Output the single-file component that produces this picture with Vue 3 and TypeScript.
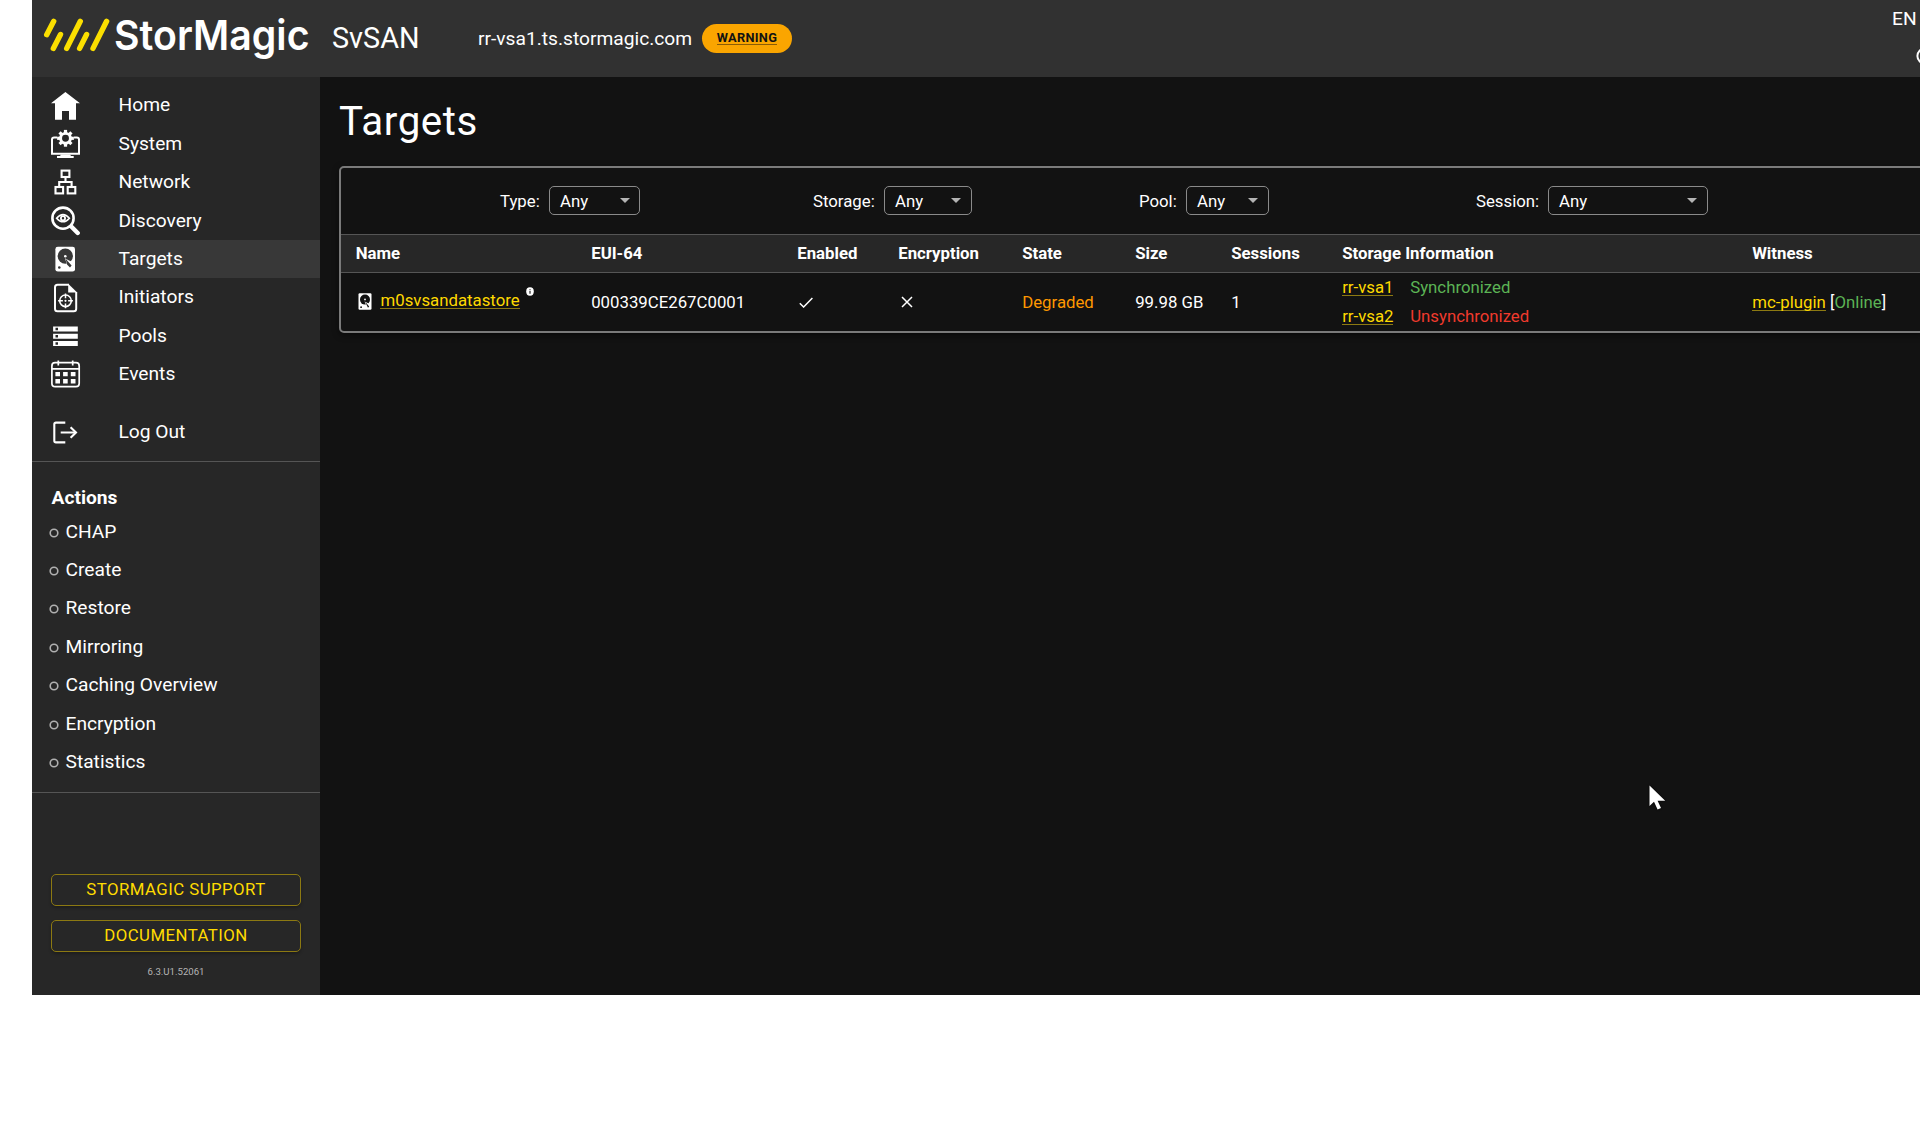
<script setup lang="ts">
interface NavItem { label: string; icon: string }
interface Filter { label: string; cls: string }

const nav: NavItem[] = [
  { label: 'Home', icon: 'home' },
  { label: 'System', icon: 'system' },
  { label: 'Network', icon: 'network' },
  { label: 'Discovery', icon: 'discovery' },
  { label: 'Targets', icon: 'targets' },
  { label: 'Initiators', icon: 'initiators' },
  { label: 'Pools', icon: 'pools' },
  { label: 'Events', icon: 'events' },
  { label: 'Log Out', icon: 'logout' },
]
const active = 'Targets'
const actions: string[] = ['CHAP', 'Create', 'Restore', 'Mirroring', 'Caching Overview', 'Encryption', 'Statistics']
const filters: Filter[] = [
  { label: 'Type:', cls: 'type' },
  { label: 'Storage:', cls: 'storage' },
  { label: 'Pool:', cls: 'pool' },
  { label: 'Session:', cls: 'session' },
]
const columns: string[] = ['Name', 'EUI-64', 'Enabled', 'Encryption', 'State', 'Size', 'Sessions', 'Storage Information', 'Witness']
const teeth: number[] = [0, 45, 90, 135, 180, 225, 270, 315]
</script>

<template>
  <div class="app">
    <header class="topbar">
      <svg class="logo" width="284" height="77" viewBox="0 0 284 77">
        <g stroke="#fbdf00" stroke-width="5.4" stroke-linecap="round">
          <path d="M14.7 34.7 21.7 21.3M21.3 48.4 28.5 34.5M34.7 48.4 48.3 21.3M47.6 48.4 54.6 34.5M61 48.4 74.6 21.3" />
        </g>
        <text x="82" y="50" textLength="195.5" lengthAdjust="spacingAndGlyphs" class="wordmark">StorMagic</text>
      </svg>
      <span class="product">SvSAN</span>
      <span class="host">rr-vsa1.ts.stormagic.com</span>
      <a class="badge"><span>WARNING</span></a>
      <div class="tools">
        <div class="lang">EN<i></i></div>
        <svg width="20" height="20" viewBox="0 0 20 20"><circle cx="10" cy="10" r="7.6" fill="none" stroke="#fff" stroke-width="2" /></svg>
      </div>
    </header>

    <div class="body">
      <aside class="sidebar">
        <nav class="nav">
          <a v-for="item in nav" :key="item.label" class="nav-item" :class="{ active: item.label === active, logout: item.icon === 'logout' }">
            <svg class="nav-icon" viewBox="0 0 30 30" width="30" height="30" fill="#fff">
              <path v-if="item.icon === 'home'" d="M14.4 1 29 12.2H25V28.8H18V20H11V28.8H4V12.2H0Z" />
              <g v-else-if="item.icon === 'system'">
                <path d="M6 8.4H3.2Q1 8.4 1 10.6V24.8H28V10.6Q28 8.4 25.8 8.4H23" fill="none" stroke="#fff" stroke-width="2" />
                <path d="M10 25.5H19L20 27H22.7V29H6V27H9Z" />
                <circle cx="14.5" cy="9.3" r="4.9" fill="none" stroke="#fff" stroke-width="2.9" />
                <rect v-for="t in teeth" :key="t" x="12.9" y="0.9" width="3.2" height="3.2" :transform="`rotate(${t} 14.5 9.3)`" />
              </g>
              <g v-else-if="item.icon === 'network'" fill="none" stroke="#fff" stroke-width="2.1">
                <rect x="10.6" y="3.6" width="7.8" height="6.4" />
                <rect x="4.5" y="20" width="7.6" height="6.4" />
                <rect x="16.7" y="20" width="7.6" height="6.4" />
                <path d="M14.5 10V15M8.2 20V15H20.6V20" />
              </g>
              <g v-else-if="item.icon === 'discovery'" fill="none" stroke="#fff">
                <circle cx="12" cy="12.2" r="10.6" stroke-width="2.6" />
                <path d="M20.5 20.8 26.7 27" stroke-width="4.4" stroke-linecap="round" />
                <path d="M5.6 12.2Q12 5 18.4 12.2Q12 19.4 5.6 12.2Z" stroke-width="1.6" />
                <circle cx="12" cy="12.2" r="2.1" stroke-width="1.8" />
              </g>
              <g v-else-if="item.icon === 'targets'">
                <rect x="4.4" y="2.8" width="19.6" height="24.8" rx="2.4" />
                <circle cx="14.3" cy="12.2" r="7.6" fill="#383838" />
                <circle cx="14.3" cy="12.2" r="1.3" />
                <path d="M14 14.2 18 16.6 22 18V24L17 24Z" />
                <path d="M14.6 14.6 17 17.4 20.6 21.5 19 23.6 16 20.4Z" fill="#383838" />
                <circle cx="8.3" cy="23.5" r="1.3" fill="#383838" />
              </g>
              <g v-else-if="item.icon === 'initiators'">
                <path d="M18 1.7H6.5Q4 1.7 4 4.2V25.8Q4 28.3 6.5 28.3H22.7Q25.2 28.3 25.2 25.8V9" fill="none" stroke="#fff" stroke-width="2" />
                <path d="M17.2.7 26.2 9.4H17.2Z" />
                <circle cx="14.5" cy="17.8" r="5.8" fill="none" stroke="#fff" stroke-width="1.6" />
                <path d="M14.5 10.4V15.2M14.5 20.4V25.2M7.1 17.8H11.9M17.1 17.8H21.9" stroke="#fff" stroke-width="1.5" />
                <circle cx="14.5" cy="17.8" r="1.1" />
              </g>
              <path v-else-if="item.icon === 'pools'" fill-rule="evenodd" d="M2.1 5.4H26.8V10.4H2.1ZM2.1 12.7H26.8V17.7H2.1ZM2.1 20H26.8V25H2.1ZM4.5 6.7H7V9.2H4.5ZM4.5 14H7V16.5H4.5ZM4.5 21.3H7V23.8H4.5Z" />
              <g v-else-if="item.icon === 'events'">
                <rect x=".9" y="3.7" width="27.3" height="24" rx="3.2" fill="none" stroke="#fff" stroke-width="1.7" />
                <path d="M1 9.9H28M7.3 1.6V6.5M21.7 1.6V6.5" stroke="#fff" stroke-width="1.7" />
                <path d="M4.4 13H9V17.3H4.4ZM12.1 13H16.7V17.3H12.1ZM19.8 13H24.5V17.3H19.8ZM4.4 20H9V24.5H4.4ZM12.1 20H16.7V24.5H12.1ZM19.8 20H24.5V24.5H19.8Z" />
              </g>
              <g v-else fill="none" stroke="#fff" stroke-width="2.1">
                <path d="M14.3 5.6H5Q3.3 5.6 3.3 7.3V23.7Q3.3 25.4 5 25.4H14.3M9.7 15.5H25" />
                <path d="M19.6 10.2 25 15.5 19.6 20.8" />
              </g>
            </svg>
            <span>{{ item.label }}</span>
          </a>
        </nav>
        <section class="actions">
          <h2>Actions</h2>
          <a v-for="a in actions" :key="a" class="action">
            <svg width="10" height="10" viewBox="0 0 10 10"><circle cx="5" cy="5" r="3.8" fill="none" stroke="#b0b0b0" stroke-width="1.6" /></svg>
            <span>{{ a }}</span>
          </a>
        </section>
        <footer class="side-foot">
          <a class="btn"><span class="support">STORMAGIC SUPPORT</span></a>
          <a class="btn"><span>DOCUMENTATION</span></a>
          <div class="version">6.3.U1.52061</div>
        </footer>
      </aside>

      <main class="main">
        <h1>Targets</h1>
        <section class="panel">
          <div class="filters">
            <label v-for="f in filters" :key="f.label" class="filter" :class="f.cls">
              <span>{{ f.label }}</span>
              <span class="select">Any<svg width="10" height="5" viewBox="0 0 10 5"><path d="M0 0H10L5 5Z" fill="#b4b4b4" /></svg></span>
            </label>
          </div>
          <div class="row head">
            <div v-for="c in columns" :key="c"><span>{{ c }}</span></div>
          </div>
          <div class="row data">
            <div class="name">
              <svg width="14" height="17" viewBox="0 0 14 17">
                <rect x=".5" y=".3" width="13" height="16.4" rx="1.2" fill="#fff" />
                <circle cx="7" cy="6.6" r="5" fill="#121212" />
                <circle cx="7" cy="6.4" r=".9" fill="#fff" />
                <path d="M6.5 8.5 12 11V14L9 14Z" fill="#fff" />
                <path d="M7 8.4 11.2 13.5 10 14.8Z" fill="#121212" />
                <circle cx="3.1" cy="14.2" r=".9" fill="#121212" />
              </svg>
              <a>m0svsandatastore</a>
              <svg class="info" width="8" height="9" viewBox="0 0 8 9"><ellipse cx="4" cy="4.5" rx="3.8" ry="4.2" fill="#fff" /><path d="M4 2.2V3.2M4 4V6.8" stroke="#222" stroke-width="1.2" /></svg>
            </div>
            <div>000339CE267C0001</div>
            <div><svg class="check" width="14" height="11" viewBox="0 0 14 11"><path d="M.8 6.3 4.6 10 13.4 1" fill="none" stroke="#fff" stroke-width="1.5" /></svg></div>
            <div><svg class="cross" width="12" height="12" viewBox="0 0 12 12"><path d="M1 1 11 11M11 1 1 11" fill="none" stroke="#fff" stroke-width="1.5" /></svg></div>
            <div class="orange">Degraded</div>
            <div class="size">99.98 GB</div>
            <div>1</div>
            <div class="storage-info">
              <p><a>rr-vsa1</a><span class="green">Synchronized</span></p>
              <p><a>rr-vsa2</a><span class="red">Unsynchronized</span></p>
            </div>
            <div class="witness"><a>mc-plugin</a>&nbsp;[<span class="green">Online</span>]</div>
          </div>
        </section>
      </main>
    </div>

    <svg class="cursor" width="18" height="26" viewBox="0 0 18 26"><path d="M.5.5V21L5 16.8 8.6 24.4 12 22.9 8.6 15.7H16.2Z" fill="#fff" /></svg>
  </div>
</template>

<style>
body { margin: 0; background: #fff; overflow: hidden; }
</style>

<style scoped>
* { box-sizing: border-box; }
.app { position: relative; margin-left: 32px; width: calc(100vw - 32px); height: 995px; overflow: hidden; background: #121212; color: #fff; font-family: Roboto, "Liberation Sans", sans-serif; font-size: 19.2px; white-space: nowrap; }
.topbar { display: flex; align-items: center; height: 77px; background: #313131; overflow: hidden; }
.logo { flex: none; }
.wordmark { font-family: Inter, "Liberation Sans", sans-serif; font-weight: 600; font-size: 41px; fill: #fff; }
.product { width: 139px; padding: 0 0 2px 16px; font-size: 28.8px; }
.host { width: 247px; padding-left: 23px; }
.badge { display: flex; align-items: center; justify-content: center; width: 90px; height: 29px; border-radius: 15px; background: #faa500; color: #121212; font-size: 12.8px; font-weight: 700; flex: none; }
.badge span { line-height: 13px; border-bottom: 1px solid #8a5c06; letter-spacing: .3px; margin-top: -1px; }
.tools { display: flex; flex-direction: column; margin-left: auto; width: 28px; height: 77px; padding-top: 7px; flex: none; }
.lang { display: flex; align-items: center; height: 23px; }
.lang i { flex: none; width: 6px; height: 6px; border-radius: 3px; background: #aaa; margin-left: 3px; }
.tools svg { flex: none; margin: 16px 0 0 22.6px; }
.body { display: flex; height: 918px; }
.sidebar { display: flex; flex-direction: column; flex: none; width: 288px; background: #272727; }
.nav { padding: 9.4px 0; height: 384.5px; border-bottom: 1px solid #555; }
.nav-item { display: flex; align-items: center; height: 38.4px; padding-left: 19px; }
.nav-item span { margin-left: 37.5px; padding-bottom: 1.3px; }
.nav-item.active { background: #383838; }
.nav-item.logout { margin-top: 19.2px; }
.nav-icon { flex: none; }
.actions { height: 331px; padding: 24px 0 0 17px; border-bottom: 1px solid #555; }
.actions h2 { margin: 0 0 0 2.5px; height: 26.5px; line-height: 24px; font-size: 19.2px; font-weight: 700; }
.action { display: flex; align-items: center; height: 38.4px; }
.action svg { flex: none; margin: 3px 6.5px 0 0; }
.side-foot { display: flex; flex-direction: column; align-items: center; gap: 14px; padding-top: 81px; }
.btn { display: flex; align-items: center; justify-content: center; width: 250px; height: 32px; border: 1px solid #8c7912; border-radius: 5px; color: #ffdb00; font-size: 16.8px; letter-spacing: .45px; box-shadow: 0 2px 3px rgba(0, 0, 0, .25); padding-bottom: 1px; }
.version { font-size: 9.6px; line-height: 12px; color: #b5b5b5; }
.main { flex: 1; min-width: 0; padding-left: 19px; font-size: 16.8px; }
h1 { margin: 21px 0 21px; height: 47px; line-height: 47px; font-size: 40.3px; letter-spacing: .55px; font-weight: 400; }
.panel { width: 1590px; height: 167px; border: 2px solid #7a7a7a; border-radius: 5px; box-shadow: 0 2px 6px rgba(0, 0, 0, .5); }
.filters { display: flex; align-items: center; height: 66px; padding-bottom: 1px; }
.filter { display: flex; align-items: center; justify-content: space-between; flex: none; height: 29px; }
.type { margin-left: 159px; width: 140px; }
.storage { margin-left: 173px; width: 159px; }
.pool { margin-left: 167px; width: 130px; }
.session { margin-left: 207px; width: 232px; }
.select { display: flex; align-items: center; justify-content: space-between; height: 29px; padding: 0 10px 0 10px; border: 1px solid #8a8a8a; border-radius: 5px; }
.type .select { width: 91px; padding-right: 9px; }
.storage .select { width: 88px; }
.pool .select { width: 83px; }
.session .select { width: 160px; }
.row { display: grid; grid-template-columns: 235.5px 206px 101px 124px 113px 96px 111px 410px 164px; padding-left: 14.7px; align-items: center; }
.head { height: 39px; padding-bottom: 2px; background: #272727; border-top: 1px solid #555; border-bottom: 1px solid #555; font-weight: 700; }
.data { height: 58px; }
a { color: #ffd900; }
.name a, .storage-info a, .witness a { display: inline-block; line-height: 16px; height: 17px; border-bottom: 1px solid #8c7912; }
.nav-item, .action { color: #fff; }
.badge { color: #121212; }
.name { display: flex; align-items: center; margin-top: -2px; }
.name a { margin: 0 6.5px 0 8.5px; position: relative; top: -1px; }
.name svg { flex: none; margin-left: 2.3px; }
.name .info { margin: -19px 0 0; }
.check { display: block; margin-left: 2px; }
.cross { display: block; margin-left: 3px; }
.orange { color: #ff9800; }
.green { color: #5cb455; }
.red { color: #f03a2d; }
.storage-info { margin-top: -2px; }
.storage-info p { display: flex; align-items: center; height: 29px; margin: 0; }
.storage-info a { width: 51px; margin-right: 17px; position: relative; top: 1px; }
.cursor { position: absolute; left: 1617px; top: 785px; filter: drop-shadow(0 0 1px #000); }
</style>
